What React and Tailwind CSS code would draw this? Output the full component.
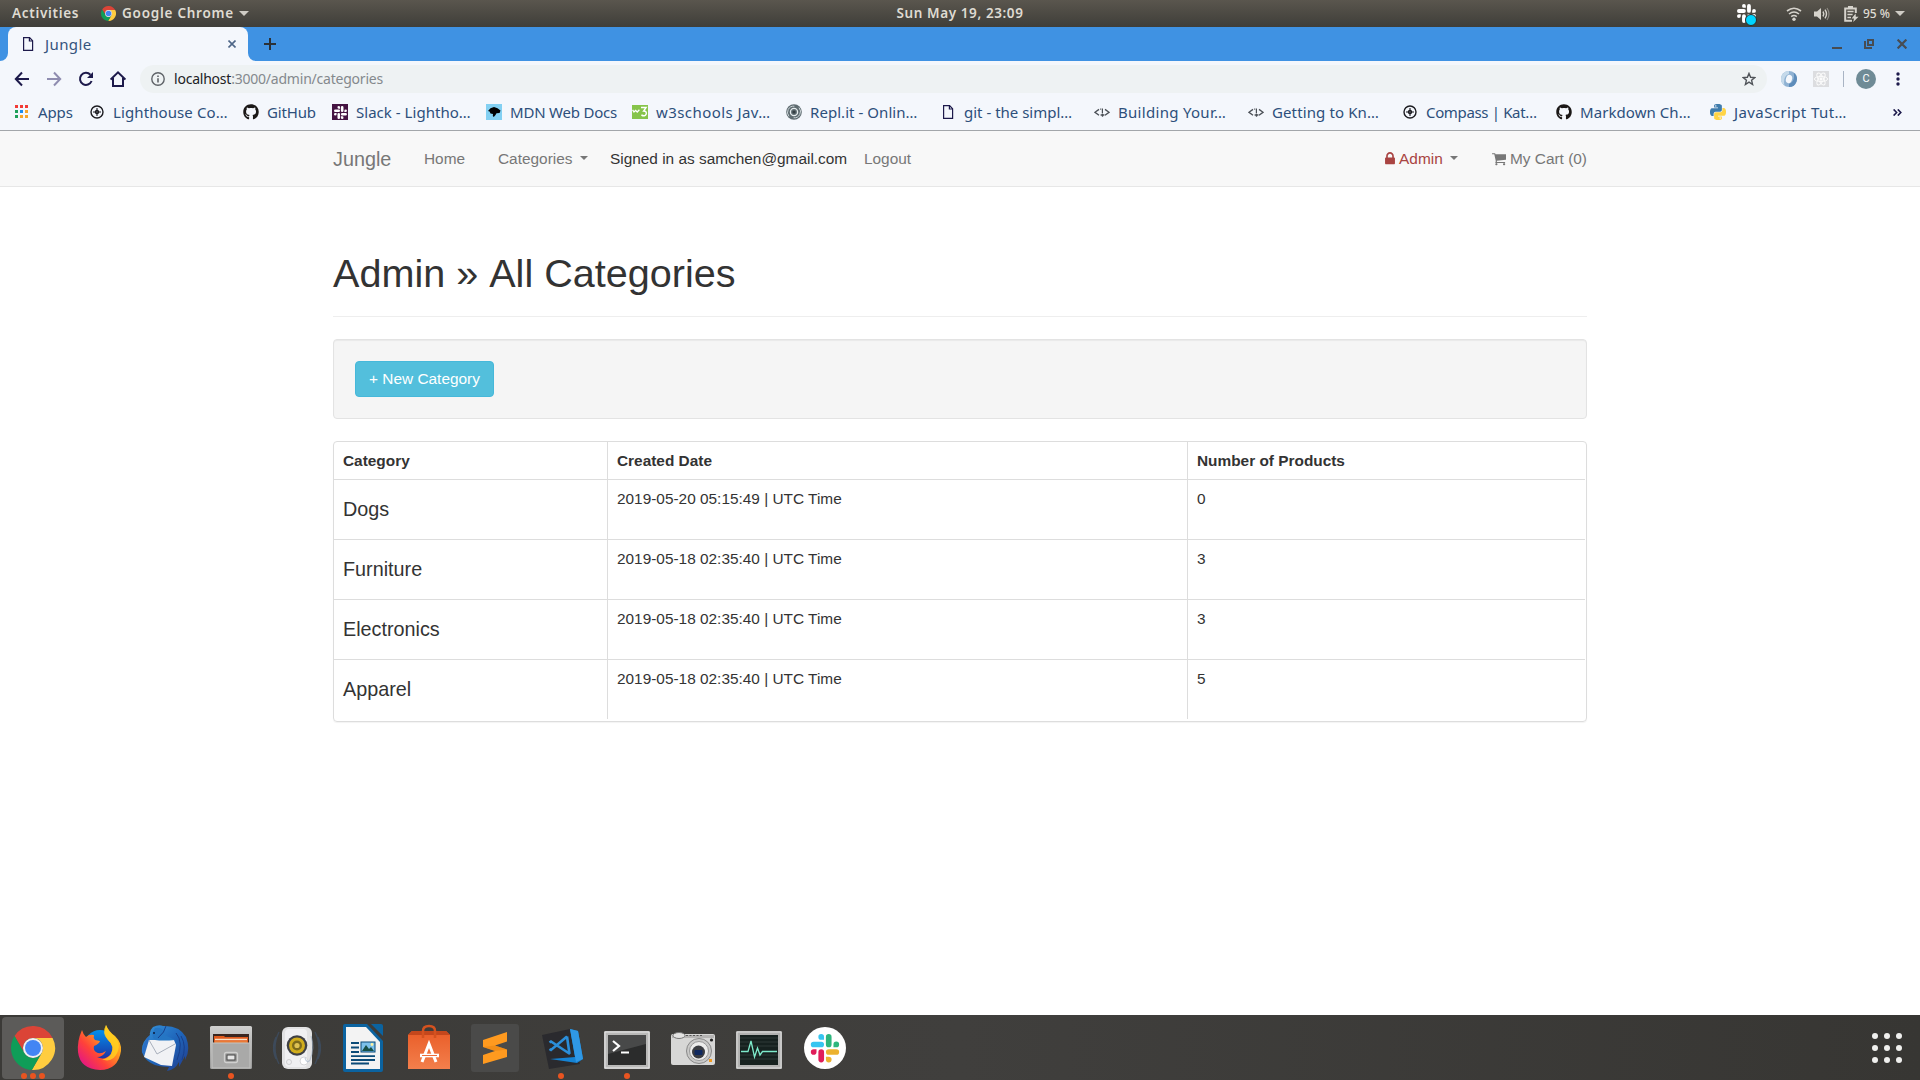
import { FaGithub } from "react-icons/fa";

const SLACK_PIECE =
  "M19.712.133a5.381 5.381 0 0 0-5.376 5.387 5.381 5.381 0 0 0 5.376 5.386h5.376V5.52A5.381 5.381 0 0 0 19.712.133m0 14.365H5.376A5.381 5.381 0 0 0 0 19.884a5.381 5.381 0 0 0 5.376 5.387h14.336a5.381 5.381 0 0 0 5.376-5.387 5.381 5.381 0 0 0-5.376-5.386";

function SlackMark({ colors, ...rest }) {
  return (
    <svg viewBox="0 0 54 54" {...rest}>
      {colors.map((c, i) => (
        <path key={i} d={SLACK_PIECE} fill={c} transform={`rotate(${i * 90} 26.9 27)`} />
      ))}
    </svg>
  );
}

function ChromeArt() {
  return (
    <g>
      <path d="M24 14H43.6A22 22 0 0 0 5.54 12.03L15.34 29A10 10 0 0 1 24 14Z" fill="#db4437" />
      <path d="M24 14H43.6A22 22 0 0 1 22.86 45.97L32.66 29A10 10 0 0 0 24 14Z" fill="#ffcd40" />
      <path d="M15.34 29L5.54 12.03A22 22 0 0 0 22.86 45.97L32.66 29A10 10 0 0 1 15.34 29Z" fill="#0f9d58" />
      <circle cx="24" cy="24" r="10" fill="#f1f1f1" />
      <circle cx="24" cy="24" r="8" fill="#4285f4" />
    </g>
  );
}

function PageIcon({ className }) {
  return (
    <svg viewBox="0 0 16 16" className={className} fill="none" stroke="#1d1a4b" strokeWidth="1.2">
      <path d="M3.6 1.6H9.6L12.6 4.8V14.4H3.6Z" />
      <path d="M9.4 1.6V5H12.6" />
    </svg>
  );
}

const PYTHON_SNAKE =
  "M14.25.18l.9.2.73.26.59.3.45.32.34.34.25.34.16.33.1.3.04.26.02.2-.01.13V8.5l-.05.63-.13.55-.21.46-.26.38-.3.31-.33.25-.35.19-.35.14-.33.1-.3.07-.26.04-.21.02H8.77l-.69.05-.59.14-.5.22-.41.27-.33.32-.27.35-.2.36-.15.37-.1.35-.07.32-.04.27-.02.21v3.06H3.17l-.21-.03-.28-.07-.32-.12-.35-.18-.36-.26-.36-.36-.35-.46-.32-.59-.28-.73-.21-.88-.14-1.05-.05-1.23.06-1.22.16-1.04.24-.87.32-.71.36-.57.4-.44.42-.33.42-.24.4-.16.36-.1.32-.05.24-.01h.16l.06.01h8.16v-.83H6.18l-.01-2.75-.02-.37.05-.34.11-.31.17-.28.25-.26.31-.23.38-.2.44-.18.51-.15.58-.12.64-.1.71-.06.77-.04.84-.02 1.27.05zm-6.3 1.98l-.23.33-.08.41.08.41.23.34.33.22.41.09.41-.09.33-.22.23-.34.08-.41-.08-.41-.23-.33-.33-.22-.41-.09-.41.09z";

function BookmarkIcon({ kind }) {
  const cls = "h-4 w-4 shrink-0";
  if (kind === "apps") {
    const colors = ["#f23b36", "#f23b36", "#f23b36", "#1fa05a", "#1a8cf0", "#f7a52c", "#1fa05a", "#f7a52c", "#f7a52c"];
    return (
      <svg viewBox="0 0 16 16" className={cls}>
        {colors.map((c, i) => (
          <rect key={i} x={1 + (i % 3) * 5} y={1 + Math.floor(i / 3) * 5} width="3" height="3" fill={c} />
        ))}
      </svg>
    );
  }
  if (kind === "compass")
    return (
      <svg viewBox="0 0 16 16" className={cls} fill="none" stroke="#1b1b1f">
        <circle cx="8" cy="8" r="6" strokeWidth="1.4" />
        <path d="M8 4V12M4 8H12" strokeWidth="1.1" />
        <circle cx="8" cy="8" r="1.6" strokeWidth="1.2" />
      </svg>
    );
  if (kind === "github") return <FaGithub className="h-4 w-4 shrink-0 text-[#1b1817]" />;
  if (kind === "slack")
    return (
      <span className="flex h-4 w-4 shrink-0 items-center justify-center bg-[#451442]">
        <SlackMark className="h-[13px] w-[13px]" colors={["#fff", "#fff", "#fff", "#fff"]} />
      </span>
    );
  if (kind === "mdn")
    return (
      <svg viewBox="0 0 16 16" className={cls}>
        <rect width="16" height="16" fill="#83d0f2" />
        <path d="M2 7L4.5 4.2L8 3L11.5 4.2L14.5 6.5L13.6 9L10.5 9.3L9.5 11L7.8 13L6.8 12L7 10L4.5 9.4L3.6 7.6Z" fill="#000" />
      </svg>
    );
  if (kind === "w3")
    return (
      <svg viewBox="0 0 16 16" className={cls} fill="none" stroke="#fff">
        <rect y="1" width="16" height="14" fill="#86c44a" stroke="none" />
        <path d="M.6 5.8L2 8L3.6 6.4L5.2 8L7.4 5.8" strokeWidth="1.3" />
        <path d="M9 3.6H14L11.6 7Q14.8 7.200 14.2 10Q13 13 9.4 11" strokeWidth="1.5" />
      </svg>
    );
  if (kind === "repl")
    return (
      <svg viewBox="0 0 16 16" className={cls} fill="none">
        <circle cx="8" cy="8" r="7.8" fill="#5e6b70" />
        <path d="M3 12.4A6.2 6.2 0 0 1 8.4 2.2M13 3.6A6.2 6.2 0 0 1 7.6 13.8" stroke="#cdd6d9" strokeWidth="1" />
        <circle cx="8" cy="8" r="3.6" stroke="#e6ecee" strokeWidth="1.3" />
        <circle cx="8" cy="8" r="1.6" fill="#333d42" />
      </svg>
    );
  if (kind === "page") return <PageIcon className={cls} />;
  if (kind === "code")
    return (
      <svg viewBox="0 0 16 16" className={cls} fill="none" stroke="#4a4f55">
        <path d="M5 5.4L1 8.3L5 11.2M11 5.4L15 8.3L11 11.2" strokeWidth="1.3" />
        <path d="M8.400 4.4V9.4" strokeWidth="1.2" />
        <path d="M6.2 5.2H7.2M6.6 11H10.400M8.500 10V12.800" strokeWidth="1.3" />
      </svg>
    );
  return (
    <svg viewBox="0 0 24 24" className={cls}>
      <path d={PYTHON_SNAKE} fill="#3f7cab" />
      <path d={PYTHON_SNAKE} fill="#ffd445" transform="rotate(180 12 12)" />
    </svg>
  );
}

const BOOKMARKS = [
  { kind: "apps", label: "Apps", box: "w-[75px]", track: "tracking-[-0.1px]" },
  { kind: "compass", label: "Lighthouse Co…", box: "w-[154px]", track: "tracking-[0.1px]" },
  { kind: "github", label: "GitHub", box: "w-[89px]", track: "tracking-[-0.15px]" },
  { kind: "slack", label: "Slack - Lightho…", box: "w-[154px]", track: "tracking-[0.03px]" },
  { kind: "mdn", label: "MDN Web Docs", box: "w-[146px]", track: "tracking-[-0.2px]" },
  { kind: "w3", label: "w3schools Jav…", box: "w-[154px]", track: "tracking-[0.43px]" },
  { kind: "repl", label: "Repl.it - Onlin…", box: "w-[154px]", track: "tracking-[0.05px]" },
  { kind: "page", label: "git - the simpl…", box: "w-[154px]", track: "tracking-[0px]" },
  { kind: "code", label: "Building Your…", box: "w-[154px]", track: "tracking-[0.3px]" },
  { kind: "code", label: "Getting to Kn…", box: "w-[154px]", track: "tracking-[0.12px]" },
  { kind: "compass", label: "Compass | Kat…", box: "w-[154px]", track: "tracking-[-0.35px]" },
  { kind: "github", label: "Markdown Ch…", box: "w-[154px]", track: "tracking-[0.07px]" },
  { kind: "python", label: "JavaScript Tut…", box: "w-[154px]", track: "tracking-[0.4px]" },
];

function TopBar() {
  return (
    <header className="grid h-[27px] grid-cols-[1fr_auto_1fr] items-center bg-linear-to-b from-[#5a564e] to-[#3f3e39] font-['Noto_Sans',sans-serif] text-[13.5px] font-semibold whitespace-nowrap text-[#dfdbd2]">
      <div className="flex items-center pl-3">
        <span className="w-[89px] tracking-[0.7px]">Activities</span>
        <svg viewBox="2 2 44 44" className="h-[15px] w-[15px]"><ChromeArt /></svg>
        <span className="ml-1.5 w-[117px] tracking-[0.75px]">Google Chrome</span>
        <svg viewBox="0 0 10 5" className="h-[5px] w-[10px]"><path d="M0 0H10L5 5Z" fill="#cfccc5" /></svg>
      </div>
      <div className="tracking-[0.6px]">Sun May 19, 23:09</div>
      <div className="flex items-center justify-end pr-[15px]">
        <span className="relative mr-[29px] h-5 w-5">
          <SlackMark className="h-[19px] w-[19px]" colors={["#fff", "#fff", "#fff", "#fff"]} />
          <span className="absolute right-0 bottom-[-2px] h-3 w-3 rounded-full border border-[#2a2a28] bg-[#00d4ff]" />
        </span>
        <svg viewBox="0 0 16 14" className="mr-3 h-[14px] w-4" fill="none" stroke="#d6d3cc" strokeWidth="1.6">
          <path d="M1 4Q8-1.4 15 4" /><path d="M3 7Q8 3 13 7" /><path d="M5.2 9.6Q8 7.4 10.8 9.6" />
          <circle cx="8" cy="12.2" r="1.7" fill="#d6d3cc" stroke="none" />
        </svg>
        <svg viewBox="0 0 16 14" className="mr-[14px] h-[14px] w-4" fill="none" stroke="#d6d3cc">
          <path d="M0 4.5H3L7 1V13L3 9.5H0Z" fill="#d6d3cc" stroke="none" />
          <path d="M9 4.5Q10.6 7 9 9.5" strokeWidth="1.4" /><path d="M11 2.6Q14 7 11 11.4" strokeWidth="1.4" />
          <path d="M13 1Q17 7 13 13" strokeWidth="1.2" opacity=".45" />
        </svg>
        <svg viewBox="0 0 15 16" className="mr-1 h-4 w-[15px]" fill="none" stroke="#d6d3cc">
          <path d="M8 14.8H1.2V2.4H11.8V7" strokeWidth="2" /><path d="M4 1H9" strokeWidth="2" />
          <path d="M3.4 5.5H9.6M3.4 8.5H8.6M3.4 11.5H7" strokeWidth="1.5" />
          <path d="M11.6 7.6L7.6 12.4H10L9.2 16L14.6 10.8H11.8Z" fill="#d6d3cc" stroke="none" />
        </svg>
        <span className="w-[32px] text-xs font-medium">95 %</span>
        <svg viewBox="0 0 10 5" className="h-[5px] w-[10px]"><path d="M0 0H10L5 5Z" fill="#cfccc5" /></svg>
      </div>
    </header>
  );
}

function TabStrip() {
  return (
    <div className="flex h-[34px] bg-[#3f92e3]">
      <svg viewBox="0 0 8 34" className="h-[34px] w-2"><path d="M8 26A8 8 0 0 1 0 34H8Z" fill="#f4f7fc" /></svg>
      <div className="flex w-60 items-center rounded-t-lg bg-[#f4f7fc] pr-3 pl-3">
        <PageIcon className="h-4 w-4" />
        <span className="ml-[9px] flex-1 font-['Noto_Sans',sans-serif] text-[15px] tracking-[0.4px] text-[#34547d]">Jungle</span>
        <svg viewBox="0 0 8 8" className="h-2 w-2" stroke="#4f6788" strokeWidth="1.6"><path d="M.5.5L7.5 7.5M7.5.5L.5 7.5" /></svg>
      </div>
      <svg viewBox="0 0 8 34" className="h-[34px] w-2"><path d="M0 26A8 8 0 0 0 8 34H0Z" fill="#f4f7fc" /></svg>
      <svg viewBox="0 0 12 12" className="mt-[11px] ml-2 h-3 w-3" stroke="#2b3138" strokeWidth="2"><path d="M6 0V12M0 6H12" /></svg>
      <div className="ml-auto flex items-start pt-3 pr-[13px]">
        <svg viewBox="0 0 10 10" className="mr-[22px] h-[10px] w-[10px]"><rect y="8" width="10" height="2" fill="#474c52" /></svg>
        <svg viewBox="0 0 10 10" className="mr-[23px] h-[10px] w-[10px]" fill="none" stroke="#474c52" strokeWidth="2">
          <path d="M4 1H9V6H4Z" /><path d="M1 2V9H8" />
        </svg>
        <svg viewBox="0 0 10 10" className="h-[10px] w-[10px]" stroke="#474c52" strokeWidth="2.2"><path d="M.6.6L9.4 9.4M9.4.6L.6 9.4" /></svg>
      </div>
    </div>
  );
}

function Toolbar() {
  return (
    <div className="flex h-9 items-center bg-[#f4f7fc] pl-[14px]">
      <svg viewBox="0 0 16 16" className="h-4 w-4" fill="none" stroke="#1d1a4b" strokeWidth="2"><path d="M15 8H2M8 1.5L1.8 8L8 14.5" /></svg>
      <svg viewBox="0 0 16 16" className="ml-4 h-4 w-4" fill="none" stroke="#8f8db0" strokeWidth="2"><path d="M1 8H14M8 1.5L14.2 8L8 14.5" /></svg>
      <svg viewBox="0 0 16 16" className="ml-4 h-4 w-4" fill="none" stroke="#1d1a4b" strokeWidth="2">
        <path d="M13.6 10A6 6 0 1 1 12.4 3.8" /><path d="M15 1V7H9Z" fill="#1d1a4b" stroke="none" />
      </svg>
      <svg viewBox="0 0 16 16" className="ml-4 h-4 w-4" fill="none" stroke="#1d1a4b" strokeWidth="2"><path d="M.6 8.6L8 1.4L15.4 8.6M3 7V15H13V7" /></svg>
      <div className="ml-[14px] flex h-7 w-[1627px] items-center rounded-full bg-[#eef2f3] pr-[11px] pl-[11px]">
        <svg viewBox="0 0 14 14" className="h-[14px] w-[14px]" fill="none" stroke="#5f6368" strokeWidth="1.4">
          <circle cx="7" cy="7" r="6.2" /><path d="M7 6.2V10.6M7 3.4V5" strokeWidth="1.6" />
        </svg>
        <span className="ml-[9px] flex-1 font-['Noto_Sans',sans-serif] text-sm tracking-[-0.22px] text-[#84898d]">
          <span className="text-[#202124]">localhost</span>:3000/admin/categories
        </span>
        <svg viewBox="0 0 14 14" className="h-[14px] w-[14px]" fill="none" stroke="#505459" strokeWidth="1.4">
          <path d="M7 1.4L8.6 5.3L12.8 5.6L9.6 8.3L10.6 12.5L7 10.2L3.4 12.5L4.4 8.3L1.2 5.6L5.4 5.3Z" />
        </svg>
      </div>
      <svg viewBox="0 0 16 16" className="ml-[14px] h-4 w-4">
        <circle cx="8" cy="8" r="8" fill="#8fb2d3" />
        <path d="M8 0A8 8 0 0 0 3.4 14.5Q1.8 5 8 3Z" fill="#c4d9ea" />
        <path d="M8 16A8 8 0 0 0 12.6 1.5Q14.6 10 8 13Z" fill="#5d8cba" />
        <ellipse cx="8" cy="8" rx="3" ry="4.3" fill="#f4f7fc" transform="rotate(18 8 8)" />
      </svg>
      <svg viewBox="0 0 16 16" className="ml-4 h-4 w-4" fill="none" stroke="#fbfbfb">
        <rect width="16" height="16" fill="#dcdde0" stroke="none" />
        <ellipse cx="8" cy="8" rx="6.6" ry="2.6" /><ellipse cx="8" cy="8" rx="6.6" ry="2.6" transform="rotate(60 8 8)" />
        <ellipse cx="8" cy="8" rx="6.6" ry="2.6" transform="rotate(120 8 8)" /><circle cx="8" cy="8" r="1.2" fill="#fbfbfb" />
      </svg>
      <span className="ml-[14px] h-4 w-px bg-[#a9b4c4]" />
      <span className="ml-3 flex h-5 w-5 items-center justify-center rounded-full bg-[#6f8b96] font-['Roboto',sans-serif] text-[11px] text-white">C</span>
      <svg viewBox="0 0 4 14" className="ml-5 h-[14px] w-1" fill="#1d1a4b"><circle cx="2" cy="2" r="1.7" /><circle cx="2" cy="7" r="1.7" /><circle cx="2" cy="12" r="1.7" /></svg>
    </div>
  );
}

function BookmarkBar() {
  return (
    <div className="flex h-[34px] items-center border-b border-[#a3a6aa] bg-[#f4f7fc] pb-[3px] pl-[14px] font-['Noto_Sans',sans-serif] text-[15px] text-[#2d4f7b]">
      {BOOKMARKS.map((b) => (
        <div key={b.label} className={`flex shrink-0 items-center gap-2 whitespace-nowrap ${b.box}`}>
          <BookmarkIcon kind={b.kind} />
          <span className={b.track}>{b.label}</span>
        </div>
      ))}
      <svg viewBox="0 0 9 7" className="ml-[29px] h-[7px] w-[9px]" fill="none" stroke="#1d1a4b" strokeWidth="1.6"><path d="M.6.4L3.6 3.5L.6 6.6M4.8.4L7.8 3.5L4.8 6.6" /></svg>
    </div>
  );
}

function Caret({ className }) {
  return <svg viewBox="0 0 8 4" className={className}><path d="M0 0H8L4 4Z" fill="currentColor" /></svg>;
}

function SiteNav() {
  return (
    <nav className="flex h-14 justify-center border-b border-[#e7e7e7] bg-[#f8f8f8] text-[15.4px] text-[#777]">
      <div className="flex w-[1254px] items-center whitespace-nowrap">
        <span className="w-[91px] pt-0.5 text-[19.8px]">Jungle</span>
        <span className="w-[74px]">Home</span>
        <span className="flex w-[112px] items-center">Categories<Caret className="ml-[8px] h-1 w-2" /></span>
        <span className="w-[254px] text-[#333]">Signed in as samchen@gmail.com</span>
        <span>Logout</span>
        <span className="ml-auto flex items-center text-[#a94442]">
          <svg viewBox="320 0 1152 1792" className="mr-1 h-[15.4px] w-[10px]" fill="currentColor">
            <path d="M640 768h512v-192q0-106-75-181t-181-75-181 75-75 181v192zm832 96v576q0 40-28 68t-68 28h-960q-40 0-68-28t-28-68v-576q0-40 28-68t68-28h32v-192q0-184 132-316t316-132 316 132 132 316v192h32q40 0 68 28t28 68z" />
          </svg>
          Admin<Caret className="ml-[7px] h-1 w-2 text-[#777]" />
        </span>
        <span className="ml-[34px] flex items-center">
          <svg viewBox="64 0 1664 1792" className="mr-1 h-[15.4px] w-[14.3px]" fill="currentColor">
            <path d="M704 1536q0 52-38 90t-90 38-90-38-38-90 38-90 90-38 90 38 38 90zm896 0q0 52-38 90t-90 38-90-38-38-90 38-90 90-38 90 38 38 90zm128-1088v512q0 24-16.5 42.5t-40.5 21.5l-1044 122q13 60 13 70 0 16-24 64h920q26 0 45 19t19 45-19 45-45 19h-1024q-26 0-45-19t-19-45q0-11 8-31.5t16-36 21.5-40 15.5-29.5l-177-823h-204q-26 0-45-19t-19-45 19-45 45-19h256q16 0 28.5 6.5t19.5 15.5 13 24.5 8 26 5.5 29.5 4.5 26h1201q26 0 45 19t19 45z" />
          </svg>
          My Cart (0)
        </span>
      </div>
    </nav>
  );
}

const ROWS = [
  ["Dogs", "2019-05-20 05:15:49 | UTC Time", "0"],
  ["Furniture", "2019-05-18 02:35:40 | UTC Time", "3"],
  ["Electronics", "2019-05-18 02:35:40 | UTC Time", "3"],
  ["Apparel", "2019-05-18 02:35:40 | UTC Time", "5"],
];

function Categories() {
  return (
    <main className="mx-auto flex w-[1254px] flex-1 flex-col text-[15.4px] leading-[22px] text-[#333]">
      <h1 className="mt-16 border-b border-[#eee] pb-[21px] text-[39.6px] leading-[44px] [font-kerning:none]">Admin » All Categories</h1>
      <section className="mt-[22px] flex h-20 items-start rounded border border-[#e3e3e3] bg-[#f5f5f5] p-[21px] shadow-[inset_0_1px_1px_rgba(0,0,0,0.05)]">
        <button className="h-9 w-[139px] rounded border border-[#46b8da] bg-[#53bfdc] text-white">+ New Category</button>
      </section>
      <section className="mt-[22px] h-[281px] overflow-hidden rounded border border-[#ddd] pr-px pb-px shadow-[0_1px_1px_rgba(0,0,0,0.05)]">
        <div className="grid h-[37px] grid-cols-[274px_580px_1fr] font-bold">
          {["Category", "Created Date", "Number of Products"].map((h, i) => (
            <div key={h} className={i < 2 ? "border-r border-[#ddd] px-[9px] pt-2" : "px-[9px] pt-2"}>{h}</div>
          ))}
        </div>
        {ROWS.map(([name, date, n]) => (
          <div key={name} className="grid h-[60px] grid-cols-[274px_580px_1fr] border-t border-[#ddd]">
            <div className="border-r border-[#ddd] px-[9px] pt-[18px] text-[19.8px]">{name}</div>
            <div className="border-r border-[#ddd] px-[9px] pt-2">{date}</div>
            <div className="px-[9px] pt-2">{n}</div>
          </div>
        ))}
      </section>
    </main>
  );
}

const DOCK = [
  { name: "Chrome", dots: 3, art: <ChromeArt /> },
  {
    name: "Firefox", dots: 0,
    art: (
      <g>
        <defs>
          <linearGradient id="ffBody" x1="1" y1="0" x2="0.1" y2="0.9"><stop offset="0" stopColor="#ffe226" /><stop offset=".4" stopColor="#ff9a1f" /><stop offset=".7" stopColor="#ff4239" /><stop offset="1" stopColor="#e31587" /></linearGradient>
          <linearGradient id="ffGlobe" x1="0" y1="0" x2="0" y2="1"><stop offset="0" stopColor="#0090ed" /><stop offset="1" stopColor="#21299b" /></linearGradient>
        </defs>
        <circle cx="25" cy="22" r="16" fill="url(#ffGlobe)" />
        <path d="M7 6Q8 10 11 13Q14 10 19 11Q18 14 20 16L25 17Q24 20 19 22Q18 26 21 28Q25 31 31 27Q28 33 22 33Q30 37 36 30Q40 22 33 16Q28 11 31 1Q34 8 40 12Q47 19 46 27Q43 46 25 46Q5 45 3 28Q2 17 7 6Z" fill="url(#ffBody)" />
        <path d="M31 1Q26 9 33 16Q40 22 36 30Q32 36 26 35Q38 40 43 27Q46 18 38 11Q33 7 31 1Z" fill="#ffd51f" opacity=".75" />
      </g>
    ),
  },
  {
    name: "Thunderbird", dots: 0,
    art: (
      <g>
        <defs><linearGradient id="tb" x1="0" y1="0" x2="1" y2="1"><stop offset="0" stopColor="#3796dc" /><stop offset=".5" stopColor="#1f66bb" /><stop offset="1" stopColor="#223b8b" /></linearGradient></defs>
        <path d="M12 3Q18 0 22 2Q38 1 45 13Q50 26 44 36L44 32L38 43L38 38Q34 46 26 47L28 43Q6 43 1 28Q0 18 9 11Q8 7 12 3Z" fill="url(#tb)" />
        <path d="M9 11Q2 18 1 28L5 34L8 15Z" fill="#2a6fc6" />
        <path d="M8 16L33 16L35 21L31 42L20 41L3 33Z" fill="#f1f2f5" />
        <path d="M8 16L16 30L34 20" fill="none" stroke="#a9b0bc" />
        <path d="M14 4Q22 2 24 11L34 16Q22 17 14 16Q9 12 14 4Z" fill="#2576c4" />
        <path d="M17 14Q24 8 25 2M35 9Q43 18 36 36M40 12Q46 22 41 36" stroke="#173f8c" fill="none" />
        <circle cx="13" cy="9" r="1" fill="#0c1c3c" />
      </g>
    ),
  },
  {
    name: "Files", dots: 1,
    art: (
      <g>
        <defs><linearGradient id="fl" x1="0" y1="0" x2="0" y2="1"><stop offset="0" stopColor="#d0d0cf" /><stop offset="1" stopColor="#989897" /></linearGradient></defs>
        <rect x="3" y="2" width="42" height="43" rx="1.5" fill="url(#fl)" />
        <rect x="6" y="10" width="36" height="10" fill="#3a2620" />
        <path d="M7 20V12H17L18 13H41V20Z" fill="#e05a1c" /><path d="M8 15.5H40" stroke="#f8e3c8" strokeWidth="1.5" /><path d="M8 18H40" stroke="#f29a4e" />
        <rect x="5" y="19" width="38" height="25" fill="#a9a9a8" stroke="#c3c3c2" />
        <rect x="17.500" y="28.500" width="13" height="10" rx="2" fill="#9b9b9a" stroke="#d0d0cf" strokeWidth="1.3" />
        <rect x="20" y="31" width="8" height="5" fill="#e6e6e6" stroke="#444" />
      </g>
    ),
  },
  {
    name: "Rhythmbox", dots: 0,
    art: (
      <g>
        <path d="M6 8Q-2 24 6 40M42 8Q50 24 42 40M3 13Q-2 24 3 35M45 13Q50 24 45 35" stroke="#3d4a5a" strokeWidth="1.4" fill="none" />
        <rect x="9" y="3" width="30" height="42" rx="6" fill="#e2e2e3" /><rect x="12" y="5" width="22" height="38" rx="4" fill="#f7f7f8" opacity=".7" />
        <circle cx="24" cy="21.500" r="10.300" fill="#3f4045" /><circle cx="24" cy="21.500" r="8" fill="#d1ad1c" />
        <circle cx="24" cy="21.500" r="5" fill="#7d6a1c" /><circle cx="24" cy="21.500" r="2.600" fill="#dfc254" />
        <circle cx="31" cy="37" r="4" fill="#fff" stroke="#d5d5d7" /><circle cx="16" cy="38" r="2.5" fill="none" stroke="#cfcfd1" />
        <path d="M38 12Q42 24 37 36Q34 40 32 34" stroke="#9fb0c6" strokeWidth="1.2" fill="none" opacity=".6" />
      </g>
    ),
  },
  {
    name: "Writer", dots: 0,
    art: (
      <g>
        <path d="M6 0H28L44 17V46Q44 48 42 48H6Q4 48 4 46V2Q4 0 6 0Z" fill="#0b63a0" />
        <path d="M32 0H42Q44 0 44 2V12Z" fill="#0b63a0" />
        <path d="M7 3H27L41 18V45H7Z" fill="#f3f3f3" />
        <path d="M12 19H20M12 23.5H20M12 28H20M12 32.2H36M12 36H36M12 39.5H30" stroke="#0b4b78" strokeWidth="1.8" />
        <rect x="22" y="18" width="14" height="10" fill="#7cc0ea" stroke="#0b4b78" />
        <path d="M23 27L27 21L30 25L32 23L35 27Z" fill="#174f45" /><circle cx="33" cy="20.5" r="1.4" fill="#fff2a0" />
      </g>
    ),
  },
  {
    name: "Software", dots: 0,
    art: (
      <g>
        <defs><linearGradient id="sw" x1="0" y1="0" x2="0" y2="1"><stop offset="0" stopColor="#e95d28" /><stop offset="1" stopColor="#f37f4c" /></linearGradient></defs>
        <path d="M3 11L7 7H41L45 11V45H3Z" fill="url(#sw)" /><path d="M3 11L7 7H41L45 11Z" fill="#c4471c" />
        <path d="M18 14V7Q18 2 24 2Q30 2 30 7V14" fill="none" stroke="#d4521f" strokeWidth="2.5" />
        <path d="M17 38L24 20L31 38" fill="none" stroke="#fff" strokeWidth="3" />
        <path d="M15 31.5H34" stroke="#fff" strokeWidth="3.6" /><path d="M17 31.5H32" stroke="#ee6d3a" strokeWidth="1" />
      </g>
    ),
  },
  {
    name: "Sublime", dots: 0,
    art: (
      <g>
        <rect width="48" height="48" rx="3" fill="#4a4a49" />
        <path d="M12 16L36 8V17.5L24 21.5L36 25.5V33L12 40V31L24 27L12 23Z" fill="#ff9a1f" />
        <path d="M12 23L24 27L36 25.5L24 21.5Z" fill="#e07f0e" opacity=".45" />
      </g>
    ),
  },
  {
    name: "VSCode", dots: 1,
    art: (
      <g>
        <path d="M5 11L33 5L43 40L12 45Z" fill="#2a2a2e" />
        <path d="M13 35L38 33L33 5L41 7L46 35L40 39Z" fill="#1583d4" /><path d="M33 5L41 7L46 35L39 38Z" fill="#2f98e6" />
        <path d="M30 12.500L14 26L12.500 25M12.500 18.500L14 17.500L33 30M30 12.500L32.500 30" stroke="#2b8fdb" strokeWidth="2.600" fill="none" />
      </g>
    ),
  },
  {
    name: "Terminal", dots: 1,
    art: (
      <g>
        <rect x="1" y="7" width="46" height="38" rx="1.5" fill="#b9b9b8" /><rect x="2" y="8" width="44" height="36" fill="none" stroke="#e8e8e8" />
        <rect x="5" y="11" width="38" height="30" fill="#2b2c2c" /><path d="M5 11H43V20L5 30Z" fill="#484949" />
        <path d="M10 17L16 22L10 27" stroke="#fff" strokeWidth="2.2" fill="none" /><path d="M18 28.5H26" stroke="#fff" strokeWidth="2" />
      </g>
    ),
  },
  {
    name: "Screenshot", dots: 0,
    art: (
      <g>
        <rect x="2" y="10" width="44" height="31" rx="2" fill="#d7d7d6" /><rect x="3" y="11" width="42" height="3" fill="#b5b4b3" />
        <ellipse cx="10" cy="11.5" rx="6" ry="3" fill="#e3e3e2" stroke="#777" /><path d="M17 11.5H33" stroke="#555" strokeDasharray="2 1.5" />
        <circle cx="30" cy="27" r="12.5" fill="#c9c9c8" stroke="#888" /><circle cx="30" cy="27" r="9.5" fill="#ececeb" stroke="#999" />
        <circle cx="29.5" cy="28" r="6.5" fill="#3b3d42" /><rect x="25.5" y="26" width="8" height="5" rx="1" fill="#10295f" />
        <circle cx="42.5" cy="16" r="1.6" fill="#222" /><rect x="40" y="35" width="3" height="3" fill="#f39a1e" />
      </g>
    ),
  },
  {
    name: "Monitor", dots: 0,
    art: (
      <g>
        <rect x="1" y="7" width="46" height="38" rx="1.5" fill="#b2b2b1" /><rect x="2" y="8" width="44" height="36" fill="none" stroke="#dedede" />
        <rect x="5" y="11" width="38" height="30" fill="#16211f" /><path d="M5 14H43M5 18H43M5 22H43M5 31H43M5 35H43" stroke="#2e3b39" />
        <path d="M6 27.5H13L16 17L19.5 33L22.5 24L25 31L27.5 27.5H42" stroke="#7deacb" strokeWidth="1.3" fill="none" />
      </g>
    ),
  },
  {
    name: "Slack", dots: 0,
    art: (
      <g>
        <circle cx="24" cy="24" r="21" fill="#fff" />
        {["#36c5f0", "#2eb67d", "#ecb22e", "#e01e5a"].map((c, i) => (
          <path key={c} d={SLACK_PIECE} fill={c} transform={`translate(9.8 10) scale(.527) rotate(${i * 90} 26.9 27)`} />
        ))}
      </g>
    ),
  },
];

function Dock() {
  return (
    <footer className="flex h-[65px] items-center justify-between bg-linear-to-r from-[#3b3a37] via-[#403f3d] to-[#373633] pr-[18px]">
      <div className="flex">
        {DOCK.map((d, i) => (
          <div key={d.name} className="relative flex h-[65px] w-[66px] justify-center pt-[2px]">
            <div className={i === 0 ? "flex h-[62px] w-[62px] items-center justify-center rounded bg-[#5c5b59]" : "flex h-[62px] w-[62px] items-center justify-center"}>
              <svg viewBox="0 0 48 48" className="h-12 w-12">{d.art}</svg>
            </div>
            <div className="absolute inset-x-0 bottom-[1px] flex justify-center gap-[3px]">
              {Array.from({ length: d.dots }, (_, k) => <span key={k} className="h-[6px] w-[6px] rounded-full bg-[#e95420]" />)}
            </div>
          </div>
        ))}
      </div>
      <div className="grid grid-cols-3 gap-[6px]">
        {Array.from({ length: 9 }, (_, k) => <span key={k} className="h-[6px] w-[6px] rounded-full bg-[#f0f0ee]" />)}
      </div>
    </footer>
  );
}

export default function App() {
  return (
    <div className="flex h-[1080px] w-[1920px] flex-col overflow-hidden bg-white font-['Liberation_Sans',Arial,sans-serif]">
      <TopBar />
      <TabStrip />
      <Toolbar />
      <BookmarkBar />
      <SiteNav />
      <Categories />
      <Dock />
    </div>
  );
}
